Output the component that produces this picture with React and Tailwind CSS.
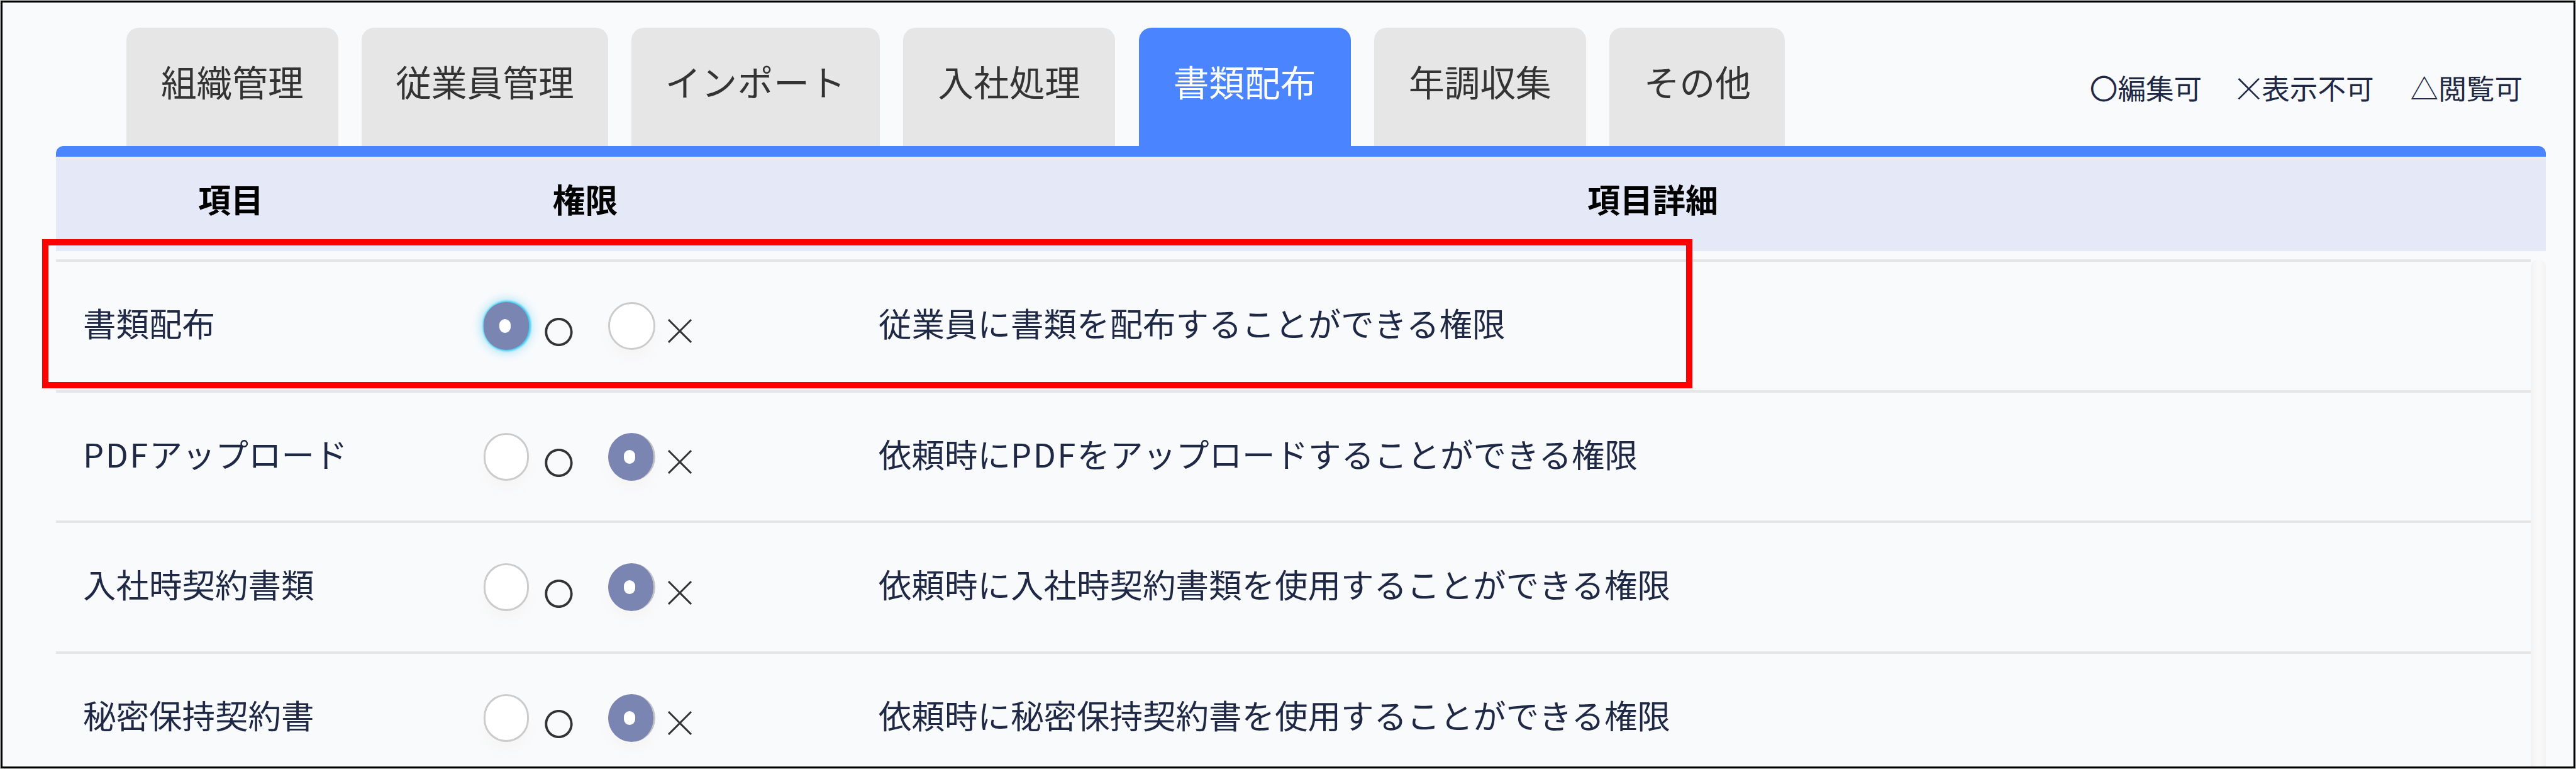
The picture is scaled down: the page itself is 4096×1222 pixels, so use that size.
import clsx from "clsx";

const tabs = [
  { label: "組織管理", width: "w-[336.6px]" },
  { label: "従業員管理", width: "w-[391.4px]" },
  { label: "インポート", width: "w-[394.6px] tracking-[0.8px]" },
  { label: "入社処理", width: "w-[336.6px]" },
  { label: "書類配布", width: "w-[337px]", active: true },
  { label: "年調収集", width: "w-[336.6px]" },
  { label: "その他", width: "w-[279px]" },
];

const Pdf = () => <span className="tracking-[2.4px]">PDF</span>;

const rows = [
  { id: "docs", name: "書類配布", detail: "従業員に書類を配布することができる権限", allowed: true, focused: true },
  { id: "pdf", name: <><Pdf />アップロード</>, detail: <>依頼時に<Pdf />をアップロードすることができる権限</> },
  { id: "contract", name: "入社時契約書類", detail: "依頼時に入社時契約書類を使用することができる権限" },
  { id: "nda", name: "秘密保持契約書", detail: "依頼時に秘密保持契約書を使用することができる権限" },
];

const Tab = ({ label, width, active }) => (
  <button
    className={clsx(
      "flex h-[188px] items-center justify-center rounded-t-[20px] pb-[20px] text-[56.7px] leading-none whitespace-nowrap",
      width,
      active ? "bg-[#4b84ff] text-white" : "bg-[#e6e6e6] text-[#333333]"
    )}
  >
    {label}
  </button>
);

const Legend = () => (
  <div className="mt-[73px] mr-[81px] flex h-[44px] items-center text-[44.6px] leading-none whitespace-nowrap">
    <span>〇編集可</span>
    <span className="ml-[50px] flex w-[45px] justify-center pl-1 text-[54px] font-light">×</span>
    <span>表示不可</span>
    <span className="ml-[58px]">△閲覧可</span>
  </div>
);

const Radio = ({ checked, focused, className }) => (
  <span
    className={clsx(
      "flex h-[76px] shrink-0 items-center justify-center rounded-full",
      className,
      checked ? "bg-[#7b85b2]" : "border-3 border-[#cccccc] bg-white",
      focused ? "shadow-[1px_0_3px_2px_#3fc8f0,0_0_16px_4px_#9fe3f7]" : "shadow-[0_18px_22px_-4px_#f6f5f4]",
      checked && !focused && "border-r-3 border-[#c4c4c8]"
    )}
  >
    {checked && <span className="mr-[5px] h-[22px] w-[18px] rounded-full bg-white" />}
  </span>
);

const Row = ({ name, detail, allowed, focused }) => (
  <div className="flex h-[207.7px] shrink-0 items-center border-t-4 border-[#e6e6e6] text-[52.5px] leading-none whitespace-nowrap">
    <div className="w-[680px] shrink-0 pb-[11px] pl-[43px]">{name}</div>
    <div className="flex w-[628px] shrink-0 items-center text-[#333333]">
      <Radio checked={allowed} focused={focused} className="w-[72px]" />
      <span className="ml-[16px] flex w-[110px] pt-[14px] pl-[7px] text-[49px]">〇</span>
      <Radio checked={!allowed} className="w-[75px]" />
      <span className="ml-[9px] pt-[11px] text-[60px] font-light">×</span>
    </div>
    <div className="pb-[11px]">{detail}</div>
  </div>
);

const App = () => (
  <div className="relative h-[1222px] w-[4096px] overflow-hidden bg-[#c8cfcc] p-px font-['Noto_Sans_CJK_JP',sans-serif] text-[#1f2945]">
    <div className="flex h-full flex-col overflow-hidden border-3 border-black bg-[#f9fafc]">
      <div className="flex shrink-0 justify-between pl-[197px]">
        <div className="flex gap-[37.6px] pt-[40px]">
          {tabs.map((tab) => <Tab key={tab.label} {...tab} />)}
        </div>
        <div className="pt-[40px]">
          <Legend />
        </div>
      </div>

      <div className="ml-[85px] flex w-[3959px] shrink-0 flex-col">
        <div className="h-[17px] rounded-t-[12px] bg-[#4b84ff]" />
        <div className="flex h-[150px] items-center border-t-4 border-[#e9ebf5] bg-[#e5e8f6] pb-[20px] text-center text-[52px] leading-none font-bold text-black">
          <div className="w-[556px]">項目</div>
          <div className="w-[571px]">権限</div>
          <div className="flex-1 pr-2">項目詳細</div>
        </div>

        <div className="mt-[13px] flex h-[831px]">
          <div className="w-[3935px]">
            {rows.map((row) => <Row key={row.id} {...row} />)}
          </div>
          <div className="w-[24px] rounded-t-full bg-linear-to-r from-[#f2f2f2] via-[#fafafa] to-[#f2f2f2]" />
        </div>
      </div>
    </div>

    {/* highlight around the first permission row */}
    <div className="absolute top-[380px] left-[67px] h-[237px] w-[2624px] border-10 border-[#ff0000]" />
  </div>
);

export default App;
